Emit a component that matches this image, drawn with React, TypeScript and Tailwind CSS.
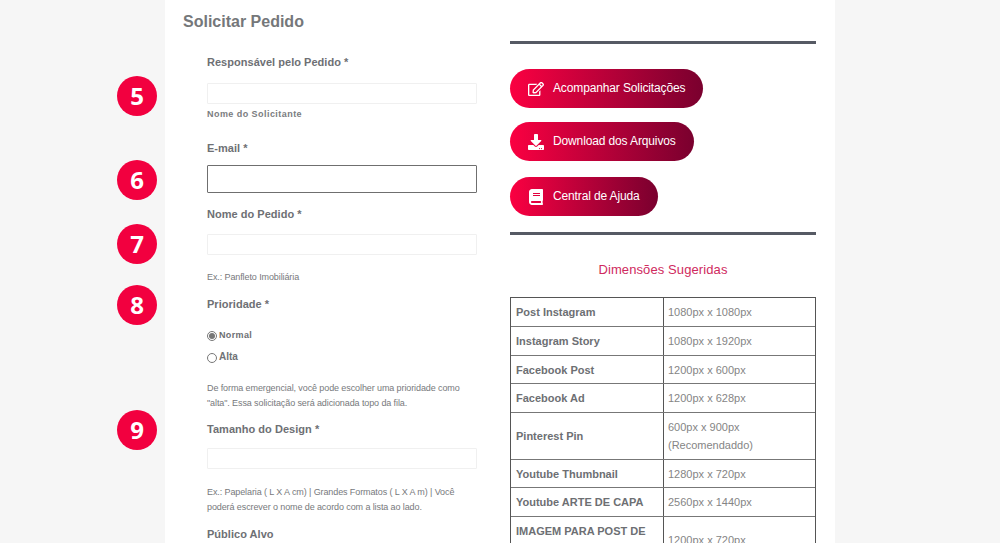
import { FaRegEdit, FaDownload, FaBook } from "react-icons/fa";

const badges = [
  { n: "5", cls: "mt-[76px]" },
  { n: "6", cls: "mt-[44px]" },
  { n: "7", cls: "mt-[24px]" },
  { n: "8", cls: "mt-[21px]" },
  { n: "9", cls: "mt-[85px]" },
];

const rows: [string, string[], string][] = [
  ["Post Instagram", ["1080px x 1080px"], "h-[29px]"],
  ["Instagram Story", ["1080px x 1920px"], "h-[29px]"],
  ["Facebook Post", ["1200px x 600px"], "h-[28px]"],
  ["Facebook Ad", ["1200px x 628px"], "h-[29px]"],
  ["Pinterest Pin", ["600px x 900px", "(Recomendaddo)"], "h-[47px]"],
  ["Youtube Thumbnail", ["1280px x 720px"], "h-[28px]"],
  ["Youtube ARTE DE CAPA", ["2560px x 1440px"], "h-[29px]"],
];

const buttons = [
  { label: "Acompanhar Solicitações", Icon: FaRegEdit, cls: "w-[193px]", mt: "mt-0" },
  { label: "Download dos Arquivos", Icon: FaDownload, cls: "w-[184px]", mt: "mt-[14px]" },
  { label: "Central de Ajuda", Icon: FaBook, cls: "w-[148px]", mt: "mt-[16px]" },
];

function Label({ children, cls }: { children: React.ReactNode; cls: string }) {
  return <div className={`text-[11px] leading-[14px] font-bold text-[#6e7074] tracking-[0.03px] ${cls}`}>{children}</div>;
}

function Field({ cls }: { cls: string }) {
  return <div className={`h-[21px] w-[270px] border border-[#f0f0f0] bg-white rounded-[1px] ${cls}`} />;
}

function Help({ children, cls }: { children: React.ReactNode; cls: string }) {
  return <div className={`whitespace-nowrap text-[9px] leading-[15px] text-[#77797c] tracking-[-0.1px] ${cls}`}>{children}</div>;
}

export default function App() {
  return (
    <div className="flex h-[543px] w-[1000px] overflow-hidden bg-[#f6f6f6] font-['Liberation_Sans',Arial,sans-serif]">
      <div className="flex w-[165px] shrink-0 flex-col items-start pl-[117px]">
        {badges.map((b) => (
          <div
            key={b.n}
            className={`flex h-[40px] w-[40px] shrink-0 items-center justify-center rounded-full bg-[#f2003f] font-['Open_Sans',sans-serif] text-[24px] font-bold leading-none text-white ${b.cls}`}
          >
            {b.n}
          </div>
        ))}
      </div>

      <div className="flex h-full w-[670px] shrink-0 flex-col bg-white">
        <h1 className="ml-[18px] mt-[13px] text-[16px] font-bold leading-[17px] text-[#75777a]">Solicitar Pedido</h1>
        <div className="flex">
          <div className="ml-[42px] flex w-[270px] shrink-0 flex-col">
            <Label cls="mt-[25px]">Responsável pelo Pedido *</Label>
            <Field cls="mt-[14px]" />
            <div className="mt-[3px] text-[9px] font-bold leading-[14px] tracking-[0.45px] text-[#7a7c80]">Nome do Solicitante</div>
            <Label cls="mt-[20px]">E-mail *</Label>
            <div className="mt-[10px] h-[28px] w-[270px] border border-[#6f6f6f] bg-white rounded-[1px]" />
            <Label cls="mt-[14px]">Nome do Pedido *</Label>
            <Field cls="mt-[13px]" />
            <Help cls="mt-[15px]">Ex.: Panfleto Imobiliária</Help>
            <Label cls="mt-[12px]">Prioridade *</Label>
            <div className="mt-[17px] flex items-center gap-[2px] text-[9px] font-bold leading-[14px] tracking-[0.35px] text-[#6c6e72]">
              <span className="mt-[2px] flex h-[10px] w-[10px] items-center justify-center rounded-full border border-[#777]">
                <span className="h-[6px] w-[6px] rounded-full bg-[#777]" />
              </span>
              Normal
            </div>
            <div className="mt-[8px] flex items-center gap-[2px] text-[10px] font-bold leading-[14px] text-[#707276]">
              <span className="mt-[2px] h-[10px] w-[10px] rounded-full border border-[#777]" />
              Alta
            </div>
            <Help cls="mt-[17px]">
              De forma emergencial, você pode escolher uma prioridade como
              <br />
              "alta". Essa solicitação será adicionada topo da fila.
            </Help>
            <Label cls="mt-[11px]">Tamanho do Design *</Label>
            <Field cls="mt-[12px]" />
            <Help cls="mt-[16px]">
              Ex.: Papelaria ( L X A cm) | Grandes Formatos ( L X A m) | Você
              <br />
              poderá escrever o nome de acordo com a lista ao lado.
            </Help>
            <Label cls="mt-[12px]">Público Alvo</Label>
          </div>

          <div className="ml-[33px] flex w-[306px] shrink-0 flex-col">
            <div className="mt-[11px] h-[3px] bg-[#565a64]" />
            <div className="mt-[25px] flex flex-col">
              {buttons.map(({ label, Icon, cls, mt }) => (
                <div
                  key={label}
                  className={`flex h-[39px] items-center rounded-full bg-gradient-to-r from-[#fb0041] to-[#7a002e] pl-[18px] text-[12px] tracking-[-0.13px] text-white ${cls} ${mt}`}
                >
                  <span className="flex w-[25px] shrink-0 items-center">
                    <Icon size={16} />
                  </span>
                  <span className="-mt-[1px]">{label}</span>
                </div>
              ))}
            </div>
            <div className="mt-[16px] h-[3px] bg-[#565a64]" />
            <div className="mt-[27px] text-center text-[13px] leading-[16px] tracking-[0.1px] text-[#cf2a5e]">Dimensões Sugeridas</div>
            <div className="mt-[19px] border-l border-t border-r border-[#555] text-[11px] leading-[18px]">
              {rows.map(([a, vals, h]) => (
                <div key={a} className={`flex border-b border-[#777] ${h}`}>
                  <div className="flex w-[153px] shrink-0 items-center border-r border-[#555] pl-[5px] font-bold text-[#6d6f73]">{a}</div>
                  <div className="flex flex-col justify-center pl-[4px] text-[#858585]">
                    {vals.map((v) => (
                      <div key={v}>{v}</div>
                    ))}
                  </div>
                </div>
              ))}
              <div className="flex h-[45px]">
                <div className="flex w-[153px] shrink-0 flex-col justify-center border-r border-[#555] pl-[5px] font-bold text-[#6d6f73]">
                  <div>IMAGEM PARA POST DE</div>
                  <div>BLOG</div>
                </div>
                <div className="flex flex-col justify-center pl-[4px] text-[#858585]">1200px x 720px</div>
              </div>
            </div>
          </div>
        </div>
      </div>
      <div className="flex-1" />
    </div>
  );
}
